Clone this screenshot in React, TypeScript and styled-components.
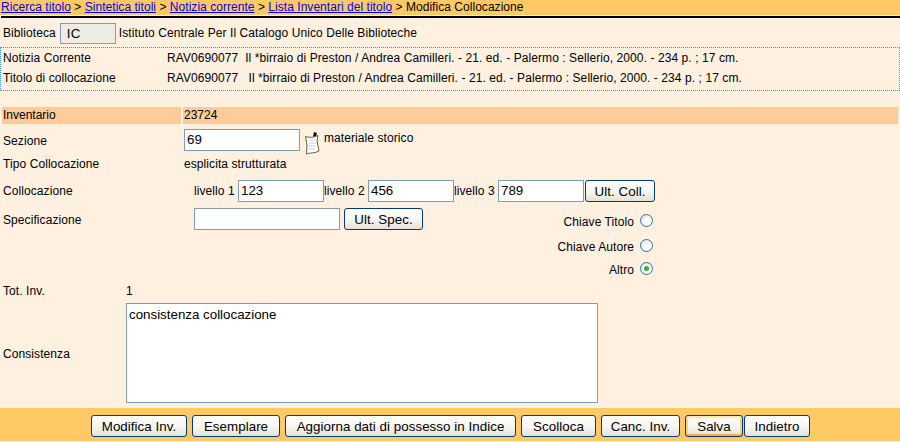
import styled, { createGlobalStyle } from 'styled-components';

const GlobalStyle = createGlobalStyle`
  html, body {
    margin: 0;
    padding: 0;
    background: #fff0e0;
    font-family: "Liberation Sans", Arial, sans-serif;
    font-size: 12px;
    letter-spacing: 0.08px;
    color: #000;
  }
`;

const Page = styled.div`
  width: 900px;
  height: 442px;
  display: flex;
  flex-direction: column;
  overflow: hidden;
  background: #fff0e0;
`;

const Crumbs = styled.div`
  height: 15px;
  line-height: 15px;
  background: #ffc966;
  white-space: nowrap;
  padding-left: 1px;
  letter-spacing: 0.04px;
`;

const CrumbLink = styled.a`
  color: #0000ee;
  text-decoration: underline;
`;

const Rule = styled.div`
  height: 2px;
  margin: 1px 0 0 1px;
  background: #000;
`;

const LibraryRow = styled.div`
  display: flex;
  align-items: center;
  height: 22px;
  margin-top: 4px;
  padding-left: 3px;
  gap: 3px;
`;

const LibraryCode = styled.div`
  width: 48px;
  height: 19px;
  line-height: 19px;
  margin-left: 1px;
  padding-left: 6px;
  background: #ecebe4;
  border: 1px solid #7f9db9;
  font-size: 13.33px;
`;

const TitleBox = styled.div`
  margin-top: 3px;
  height: 41px;
  border: 1px dotted #3d94f5;
  display: flex;
  flex-direction: column;
  justify-content: space-around;
  padding: 0 0 1px 2px;
`;

const TitleRow = styled.div`
  display: grid;
  grid-template-columns: 164px 1fr;
  height: 19px;
  line-height: 19px;
  white-space: pre;
`;

const InventoryBar = styled.div`
  display: grid;
  grid-template-columns: 179px 1fr;
  gap: 2px;
  margin: 16px 2px 0;
  height: 17px;
  line-height: 17px;
`;

const InventoryCell = styled.div`
  background: #ffcc99;
  padding-left: 1px;
  letter-spacing: 0;
`;

const Row = styled.div<{ $h: number; $top?: number }>`
  display: grid;
  grid-template-columns: 184px 1fr;
  align-items: center;
  height: ${(p) => p.$h}px;
  margin-top: ${(p) => p.$top ?? 0}px;
  padding-left: 3px;
`;

const Value = styled.div<{ $indent?: number }>`
  display: flex;
  align-items: center;
  gap: 3px;
  margin-left: ${(p) => p.$indent ?? -3}px;
  white-space: nowrap;
`;

const SectionLabel = styled.span`
  margin-top: 2px;
`;

const SectionNote = styled.span`
  margin: -4px 0 0 1px;
`;

const TextField = styled.div<{ $w: number; $h?: number }>`
  box-sizing: border-box;
  flex: none;
  width: ${(p) => p.$w}px;
  height: ${(p) => p.$h ?? 22}px;
  line-height: ${(p) => (p.$h ?? 22) - 3}px;
  padding-left: 2px;
  background: #fff;
  border: 1px solid #7f9db9;
  font-size: 13.33px;
  letter-spacing: 0;
`;

const LevelLabel = styled.span`
  width: 44px;
  flex: none;
`;

const Levels = styled.div`
  display: flex;
  align-items: center;
  gap: 0;
  margin-right: -2px;
`;

const PaperIcon = styled.svg`
  width: 16px;
  height: 24px;
  margin: 6px 0 0 1px;
  flex: none;
`;

const Button = styled.button<{ $w: number; $active?: boolean }>`
  box-sizing: border-box;
  width: ${(p) => p.$w}px;
  height: 22px;
  padding: 0;
  border: 1px solid #003c74;
  border-radius: 3px;
  background: linear-gradient(#ffffff 0%, #f6f5f0 55%, #e3e1d8 100%);
  box-shadow: ${(p) =>
    p.$active
      ? 'inset 0 2px 0 #fce9b8, inset 0 -2px 0 #f9b33c, inset 2px 0 0 #fbd079, inset -2px 0 0 #fbd079'
      : 'none'};
  font-family: "Liberation Sans", Arial, sans-serif;
  font-size: 13.33px;
  letter-spacing: 0.05px;
  color: #000;
`;

const SpecArea = styled.div`
  display: grid;
  grid-template-columns: 184px 240px 1fr;
  padding: 0 247px 0 3px;
  height: 72px;
  margin-top: 6px;
`;

const SpecLabel = styled.div`
  margin-top: 5px;
  line-height: 15px;
`;

const SpecField = styled.div`
  display: flex;
  align-items: flex-start;
  gap: 4px;
  margin-left: 7px;
`;

const KeyList = styled.div`
  display: flex;
  flex-direction: column;
  align-items: flex-end;
  margin-top: 1px;
`;

const KeyRow = styled.label<{ $h: number }>`
  display: flex;
  align-items: center;
  gap: 6px;
  height: ${(p) => p.$h}px;
`;

const Radio = styled.span<{ $on?: boolean }>`
  position: relative;
  box-sizing: border-box;
  width: 13px;
  height: 13px;
  margin-top: -3px;
  border-radius: 50%;
  border: 1px solid #3f6c99;
  background: radial-gradient(circle at 65% 65%, #ffffff 30%, #d5d9dd 100%);
  &::after {
    content: '';
    display: ${(p) => (p.$on ? 'block' : 'none')};
    position: absolute;
    left: 3px;
    top: 3px;
    width: 5px;
    height: 5px;
    border-radius: 50%;
    background: #2fb52f;
  }
`;

const TotRow = styled.div`
  display: grid;
  grid-template-columns: 123px 1fr;
  height: 17px;
  line-height: 17px;
  padding-left: 3px;
  margin-top: 3px;
`;

const ConsistencyRow = styled.div`
  display: grid;
  grid-template-columns: 123px auto 1fr;
  align-items: center;
  padding-left: 3px;
  margin-top: 3px;
`;

const ConsistencyLabel = styled.span`
  margin-top: 2px;
`;

const ConsistencyBox = styled.div`
  box-sizing: border-box;
  width: 472px;
  height: 100px;
  padding: 3px 2px;
  background: #fff;
  border: 1px solid #7f9db9;
  font-size: 13.33px;
  line-height: 15px;
  letter-spacing: 0;
`;

const Footer = styled.div`
  display: flex;
  justify-content: flex-start;
  gap: 5px;
  box-sizing: border-box;
  height: 33px;
  margin-top: 5px;
  padding: 7px 0 0 91px;
  background: #ffc966;
`;

const Tight = styled.div`
  display: flex;
  gap: 1px;
`;

export default function App() {
  return (
    <Page>
      <GlobalStyle />
      <Crumbs>
        <CrumbLink href="#">Ricerca titolo</CrumbLink> &gt; <CrumbLink href="#">Sintetica titoli</CrumbLink> &gt;{' '}
        <CrumbLink href="#">Notizia corrente</CrumbLink> &gt; <CrumbLink href="#">Lista Inventari del titolo</CrumbLink> &gt; Modifica Collocazione
      </Crumbs>
      <Rule />
      <LibraryRow>
        <span>Biblioteca</span>
        <LibraryCode>IC</LibraryCode>
        <span>Istituto Centrale Per Il Catalogo Unico Delle Biblioteche</span>
      </LibraryRow>
      <TitleBox>
        <TitleRow>
          <span>Notizia Corrente</span>
          <span>RAV0690077  Il *birraio di Preston / Andrea Camilleri. - 21. ed. - Palermo : Sellerio, 2000. - 234 p. ; 17 cm.</span>
        </TitleRow>
        <TitleRow>
          <span>Titolo di collocazione</span>
          <span>RAV0690077   Il *birraio di Preston / Andrea Camilleri. - 21. ed. - Palermo : Sellerio, 2000. - 234 p. ; 17 cm.</span>
        </TitleRow>
      </TitleBox>
      <InventoryBar>
        <InventoryCell>Inventario</InventoryCell>
        <InventoryCell>23724</InventoryCell>
      </InventoryBar>
      <Row $h={26} $top={1}>
        <SectionLabel>Sezione</SectionLabel>
        <Value>
          <TextField $w={116}>69</TextField>
          <PaperIcon viewBox="0 0 16 24">
            <path d="M1.5 5.5 C5 7 10 6.5 14 4.5 L13 10 L15 20 C11 22.5 6 21.5 2.5 23 L3 14 Z" fill="#fff" stroke="#56683c" strokeWidth="1" />
            <path d="M5 9h6M5 12h7M5 15h6M5 18h6" stroke="#c9c6ea" strokeWidth="1" />
            <path d="M9 5.5 L10 1 L13 2 L12 5 Z" fill="#111" />
          </PaperIcon>
          <SectionNote>materiale storico</SectionNote>
        </Value>
      </Row>
      <Row $h={15} $top={5}>
        <span>Tipo Collocazione</span>
        <Value>esplicita strutturata</Value>
      </Row>
      <Row $h={22} $top={9}>
        <span>Collocazione</span>
        <Value $indent={7}>
          <Levels>
            <LevelLabel>livello 1</LevelLabel>
            <TextField $w={86}>123</TextField>
            <LevelLabel>livello 2</LevelLabel>
            <TextField $w={86}>456</TextField>
            <LevelLabel>livello 3</LevelLabel>
            <TextField $w={86}>789</TextField>
          </Levels>
          <Button $w={70}>Ult. Coll.</Button>
        </Value>
      </Row>
      <SpecArea>
        <SpecLabel>Specificazione</SpecLabel>
        <SpecField>
          <TextField $w={146}></TextField>
          <Button $w={79}>Ult. Spec.</Button>
        </SpecField>
        <KeyList>
          <KeyRow $h={25}>Chiave Titolo <Radio /></KeyRow>
          <KeyRow $h={25}>Chiave Autore <Radio /></KeyRow>
          <KeyRow $h={21}>Altro <Radio $on /></KeyRow>
        </KeyList>
      </SpecArea>
      <TotRow>
        <span>Tot. Inv.</span>
        <span>1</span>
      </TotRow>
      <ConsistencyRow>
        <ConsistencyLabel>Consistenza</ConsistencyLabel>
        <ConsistencyBox>consistenza collocazione</ConsistencyBox>
      </ConsistencyRow>
      <Footer>
        <Button $w={96}>Modifica Inv.</Button>
        <Button $w={88}>Esemplare</Button>
        <Button $w={231}>Aggiorna dati di possesso in Indice</Button>
        <Button $w={75}>Scolloca</Button>
        <Button $w={79}>Canc. Inv.</Button>
        <Tight>
          <Button $w={58} $active>Salva</Button>
          <Button $w={66}>Indietro</Button>
        </Tight>
      </Footer>
    </Page>
  );
}
